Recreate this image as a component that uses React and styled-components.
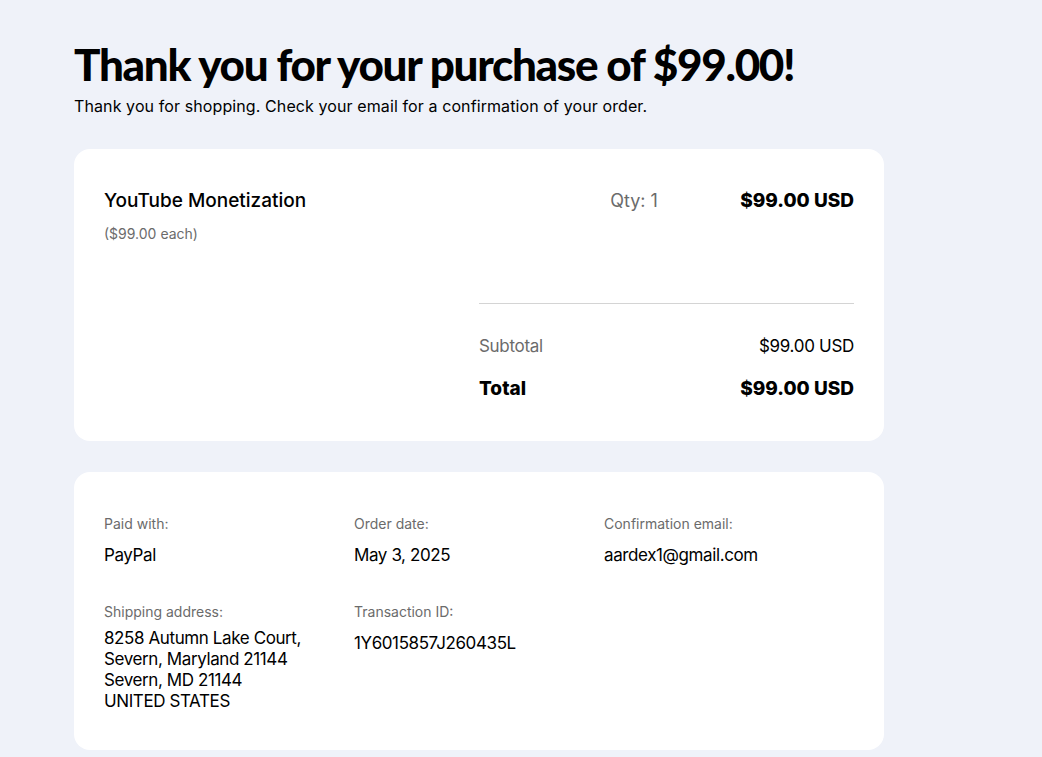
import React from "react";
import styled, { createGlobalStyle } from "styled-components";

const Global = createGlobalStyle`
  html, body { margin: 0; padding: 0; background: #eff2f9; }
  body { font-family: Inter, "Noto Sans", Arial, sans-serif; color: #000; }
`;

const Page = styled.main`
  min-height: 757px;
  padding: 38px 0 0 74px;
  box-sizing: border-box;
`;

const Container = styled.div`
  width: 810px;
`;

const Heading = styled.h1`
  margin: 0;
  font-family: Lato, Inter, sans-serif;
  font-weight: 900;
  font-size: 44px;
  line-height: 52px;
  letter-spacing: -1.3px;
`;

const Sub = styled.p`
  margin: 5px 0 0;
  font-size: 16px;
  line-height: 22px;
  letter-spacing: 0.1px;
`;

const Card = styled.section`
  background: #fff;
  border-radius: 16px;
  padding: ${(p) => p.$pad};
  margin-top: ${(p) => p.$mt}px;
  box-sizing: border-box;
  height: ${(p) => p.$h}px;
`;

const ItemRow = styled.div`
  display: flex;
  align-items: flex-start;
`;

const ItemInfo = styled.div`
  flex: 1;
`;

const ItemName = styled.div`
  font-size: 19px;
  line-height: 24px;
  font-weight: 500;
`;

const Each = styled.div`
  margin-top: 12px;
  font-size: 14px;
  line-height: 18px;
  color: #6b6b6b;
`;

const Qty = styled.div`
  font-size: 18px;
  line-height: 24px;
  color: #6b6b6b;
  width: 130px;
`;

const Price = styled.div`
  font-size: 19px;
  line-height: 24px;
  font-weight: 800;
  text-align: right;
`;

const Summary = styled.div`
  width: 375px;
  margin: 60px 0 0 auto;
  border-top: 1px solid #d4d4d4;
`;

const SumRow = styled.div`
  display: flex;
  justify-content: space-between;
  font-size: ${(p) => (p.$total ? 19 : 17)}px;
  line-height: 24px;
  font-weight: ${(p) => (p.$total ? 800 : 400)};
  margin-top: ${(p) => p.$mt}px;
  letter-spacing: ${(p) => (p.$total ? 0 : -0.3)}px;
`;

const SumLabel = styled.span`
  color: ${(p) => (p.$muted ? "#6b6b6b" : "#000")};
`;

const Grid = styled.div`
  display: grid;
  grid-template-columns: 250px 250px 250px;
  row-gap: 37px;
`;

const Field = styled.div``;

const Label = styled.div`
  font-size: 14px;
  line-height: 18px;
  color: #6b6b6b;
`;

const Value = styled.div`
  margin-top: ${(p) => p.$mt ?? 12}px;
  font-size: 17px;
  line-height: 21px;
  letter-spacing: -0.4px;
`;

export default function App() {
  return (
    <>
      <Global />
      <Page>
        <Container>
          <Heading>Thank you for your purchase of $99.00!</Heading>
          <Sub>Thank you for shopping. Check your email for a confirmation of your order.</Sub>

          <Card $pad="40px 30px" $mt={32} $h={292}>
            <ItemRow>
              <ItemInfo>
                <ItemName>YouTube Monetization</ItemName>
                <Each>($99.00 each)</Each>
              </ItemInfo>
              <Qty>Qty: 1</Qty>
              <Price>$99.00 USD</Price>
            </ItemRow>
            <Summary>
              <SumRow $mt={30}>
                <SumLabel $muted>Subtotal</SumLabel>
                <span>$99.00 USD</span>
              </SumRow>
              <SumRow $total $mt={19}>
                <SumLabel>Total</SumLabel>
                <span>$99.00 USD</span>
              </SumRow>
            </Summary>
          </Card>

          <Card $pad="43px 30px" $mt={31} $h={278}>
            <Grid>
              <Field>
                <Label>Paid with:</Label>
                <Value>PayPal</Value>
              </Field>
              <Field>
                <Label>Order date:</Label>
                <Value>May 3, 2025</Value>
              </Field>
              <Field>
                <Label>Confirmation email:</Label>
                <Value>aardex1@gmail.com</Value>
              </Field>
              <Field>
                <Label>Shipping address:</Label>
                <Value $mt={7}>
                  8258 Autumn Lake Court,
                  <br />
                  Severn, Maryland 21144
                  <br />
                  Severn, MD 21144
                  <br />
                  UNITED STATES
                </Value>
              </Field>
              <Field>
                <Label>Transaction ID:</Label>
                <Value>1Y6015857J260435L</Value>
              </Field>
            </Grid>
          </Card>
        </Container>
      </Page>
    </>
  );
}
